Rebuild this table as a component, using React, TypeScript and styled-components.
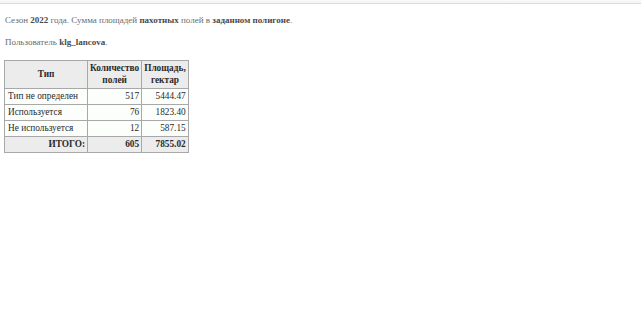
import React from "react";
import styled, { createGlobalStyle } from "styled-components";

const Global = createGlobalStyle`
  html, body { margin: 0; padding: 0; background: #fff; }
  body { font-family: "Liberation Serif", "Times New Roman", serif; }
`;

const TopBar = styled.div`
  height: 3px;
  border-bottom: 1px solid #dcdcdc;
  background: linear-gradient(#fafafa, #f3f3f3);
`;

const Page = styled.div`
  padding: 11px 5px;
  color: #6b6b6b;
  font-size: 9px;
`;

const Para = styled.p`
  margin: 0 0 11px;
  line-height: 11px;
  b { color: #4a4a4a; }
`;

const Table = styled.table`
  border-collapse: collapse;
  margin-left: -1px;
  margin-top: 12px;
  font-size: 9.3px;
  color: #2a2a2a;
  border: 1px solid #9a9a9a;
`;

const Th = styled.th`
  background: #ececec;
  border: 1px solid #a8a8a8;
  padding: 1px 2px 2px;
  height: 23px;
  line-height: 12px;
  font-weight: bold;
  text-align: center;
`;

const Td = styled.td<{ $right?: boolean; $bold?: boolean; $total?: boolean }>`
  border: 1px solid #a8a8a8;
  padding: 2px ${(p) => (p.$right ? 2 : 3)}px;
  height: 11px;
  line-height: 11px;
  text-align: ${(p) => (p.$right ? "right" : "left")};
  font-weight: ${(p) => (p.$bold ? "bold" : "normal")};
  background: ${(p) => (p.$total ? "#ececec" : "#fbfefb")};
`;

const rows = [
  ["Тип не определен", "517", "5444.47"],
  ["Используется", "76", "1823.40"],
  ["Не используется", "12", "587.15"],
];

export default function App() {
  return (
    <>
      <Global />
      <TopBar />
      <Page>
        <Para>
          Сезон <b>2022</b> года. Сумма площадей <b>пахотных</b> полей в{" "}
          <b>заданном полигоне</b>.
        </Para>
        <Para>
          Пользователь <b>klg_lancova</b>.
        </Para>
        <Table>
          <thead>
            <tr>
              <Th style={{ width: 78 }}>Тип</Th>
              <Th>
                Количество
                <br />
                полей
              </Th>
              <Th>
                Площадь,
                <br />
                гектар
              </Th>
            </tr>
          </thead>
          <tbody>
            {rows.map((r) => (
              <tr key={r[0]}>
                <Td>{r[0]}</Td>
                <Td $right>{r[1]}</Td>
                <Td $right>{r[2]}</Td>
              </tr>
            ))}
            <tr>
              <Td $right $bold $total>
                ИТОГО:
              </Td>
              <Td $right $bold $total>
                605
              </Td>
              <Td $right $bold $total>
                7855.02
              </Td>
            </tr>
          </tbody>
        </Table>
      </Page>
    </>
  );
}
